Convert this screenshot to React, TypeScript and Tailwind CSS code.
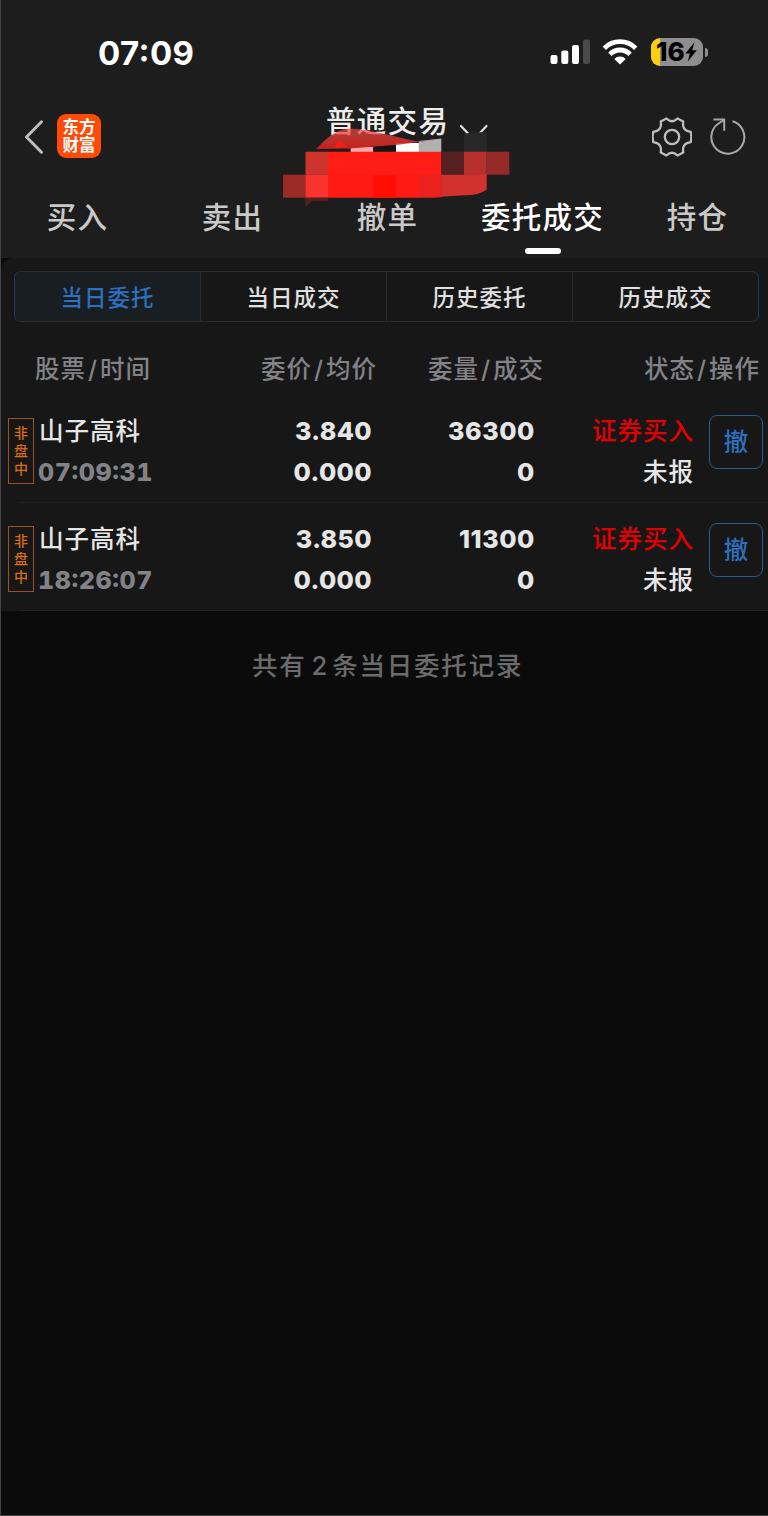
import clsx from 'clsx';

type Order = {
  name: string;
  time: string;
  price: string;
  average: string;
  volume: string;
  filled: string;
  side: string;
  status: string;
};

const TABS = ['买入', '卖出', '撤单', '委托成交', '持仓'];
const SEGMENTS = ['当日委托', '当日成交', '历史委托', '历史成交'];

const ORDERS: Order[] = [
  {
    name: '山子高科',
    time: '07:09:31',
    price: '3.840',
    average: '0.000',
    volume: '36300',
    filled: '0',
    side: '证券买入',
    status: '未报',
  },
  {
    name: '山子高科',
    time: '18:26:07',
    price: '3.850',
    average: '0.000',
    volume: '11300',
    filled: '0',
    side: '证券买入',
    status: '未报',
  },
];

export default function App() {
  return (
    <div className="flex h-[1516px] w-[768px] flex-col overflow-hidden border-b border-l border-[#454545] bg-[#0b0b0b] font-['Inter','Noto_Sans_CJK_SC',sans-serif] font-medium text-[#e6e6e6]">
      <header className="flex h-[258px] shrink-0 flex-col bg-[#1d1d1d]">
        <StatusBar />
        <TitleBar />
        <Tabs active="委托成交" />
      </header>

      <main className="h-[353px] shrink-0 rounded-tl-xl bg-[#171717]">
        <Segments active="当日委托" />
        <TableHead />
        {ORDERS.map((order) => (
          <OrderRow key={order.time} order={order} />
        ))}
      </main>

      <p className="mt-[37px] ml-[251px] h-9 text-[25.5px] leading-9 tracking-[1.8px] whitespace-nowrap text-[#6b6b6b]">
        共有<span className="mr-[3px] ml-[5px]">2</span>条当日委托记录
      </p>
    </div>
  );
}

function StatusBar() {
  return (
    <div className="flex h-[104px] items-center pl-[97px]">
      <span className="mt-0.5 w-[452px] text-[33px] leading-10 font-bold tracking-[0.4px] text-white [font-feature-settings:'case']">
        07:09
      </span>
      <svg className="h-[26px] w-10" viewBox="0 0 40 26" fill="#fff">
        <rect x="0.5" y="16" width="7" height="9" rx="2" />
        <rect x="11.3" y="11.5" width="7" height="13.5" rx="2" />
        <rect x="22" y="6" width="7" height="19" rx="2" />
        <rect x="33" y="0.5" width="7" height="24.5" rx="2" fill="#4a4a4a" />
      </svg>
      <svg className="ml-3 h-[26px] w-9" viewBox="0 0 36 26">
        <g fill="none" stroke="#fff" strokeWidth="4.8">
          <path d="M2.3 9.3a22 22 0 0 1 31.4 0" />
          <path d="M7.900 15.300a14 14 0 0 1 20.200 0" />
        </g>
        <path d="M12.3 20a8 8 0 0 1 11.4 0L18 25.5Z" fill="#fff" />
      </svg>
      <div className="ml-[13px] flex items-center gap-0.5">
        <div className="flex h-7 w-[52px] items-center rounded-[9px] bg-linear-to-r from-[#fccf12] from-[9px] to-[#8e8e8e] to-[9px] pl-[5px] text-black">
          <span className="text-[26px] leading-7 font-extrabold tracking-[0px]">16</span>
          <svg className="h-5 w-3" viewBox="0 0 12 20">
            <path d="M9.3 0.5 0.4 11.6h4.4L2.8 19.5 11.8 8.2H7.2Z" />
          </svg>
        </div>
        <span className="h-[9px] w-[3px] rounded-r-full bg-[#8e8e8e]" />
      </div>
    </div>
  );
}

function TitleBar() {
  return (
    <div className="relative flex h-[66px] items-center">
      <svg
        className="ml-[23px] h-9 w-5"
        viewBox="0 0 20 36"
        fill="none"
        stroke="#bdbdbd"
        strokeWidth="3"
        strokeLinecap="round"
        strokeLinejoin="round"
      >
        <path d="M17.5 2.8 2.5 18l15 15.2" />
      </svg>
      <div className="mr-px mb-0.5 ml-[13px] flex size-[44px] flex-col justify-center rounded-[9px] bg-[#ff4a08] text-center text-[16.5px] leading-[18px] font-bold text-white">
        <span>东方</span>
        <span>财富</span>
      </div>
      <div className="mb-[33px] ml-[224px] flex w-[326px] items-center">
        <h1 className="text-[29.5px] leading-10 font-medium tracking-[1.3px] text-[#ededed]">
          普通交易
        </h1>
        <svg
          className="mt-[18px] ml-2.5 h-4 w-[30px]"
          viewBox="0 0 30 16"
          fill="none"
          stroke="#e0e0e0"
          strokeWidth="2.2"
          strokeLinecap="round"
        >
          <path d="m2 4 7 7.5M27.500 4l-7 7.500" />
        </svg>
      </div>
      <svg
        className="h-10 w-10"
        viewBox="0 0 40 40"
        fill="none"
        stroke="#bdbdbd"
        strokeWidth="2.3"
        strokeLinejoin="round"
      >
        <path d="M14.500 1.500Q20 7 25.500 1.500L31.300 4.500Q29.500 13.500 38.700 14.800Q40 20 38.700 25.200Q29.500 26.500 31.300 35.500L25.500 38.500Q20 33 14.500 38.500L8.700 35.500Q10.500 26.500 1.300 25.200Q0 20 1.300 14.800Q10.500 13.500 8.700 4.500Z" />
        <circle cx="20" cy="20" r="7.2" />
      </svg>
      <svg
        className="ml-[18px] h-10 w-9"
        viewBox="0 0 36 40"
        fill="none"
        stroke="#a8a8a8"
        strokeWidth="2"
      >
        <path d="M22.500 4.300A16.500 16.500 0 1 1 8.500 6.500L14 3" />
        <path d="M3.500 2.500H14.200V13.800" />
      </svg>
      <AccountMask />
    </div>
  );
}

// Mosaic laid over the account number, drawn in page coordinates
function AccountMask() {
  return (
    <svg
      className="absolute top-[24px] left-[281px] h-20 w-[230px]"
      viewBox="282 128 230 80"
      shapeRendering="geometricPrecision"
    >
      <defs>
        <linearGradient id="smear" x1="0" x2="0" y1="0" y2="1">
          <stop offset="0" stopColor="#f34b45" stopOpacity="0.65" />
          <stop offset="1" stopColor="#c81f1b" />
        </linearGradient>
      </defs>
      <path d="M350.700 147h22.600v5h-22.600Z" fill="#ffa9a9" />
      <path d="M373.300 145h23v7h-23Z" fill="#141414" />
      <path d="M396 143h23v9h-23Z" fill="#fff" />
      <path d="M418.700 141 441.300 138.500V152h-22.600Z" fill="#b0b0b0" />
      <path
        d="M316 149C323 143 332 130 349 128.500C370 129 395 137 418 141.500L441 139L400 144.500L350 148.500Z"
        fill="url(#smear)"
      />
      <path d="m334 148 5-8 8 7Z" fill="#f51d18" />
      <path d="M464 133.500q12-.5 22.700-2V152H464Z" fill="#282828" />
      <g>
        <path d="M305.500 151.700H328v23h-22.500Z" fill="#ce342e" />
        <path d="M328 151.700h113.500v24H328Z" fill="#ff1d16" />
        <path d="M441.300 151.700H464v23h-22.700Z" fill="#552020" />
        <path d="M464 151.700h22.700v24H464Z" fill="#b7312c" />
        <path d="M486.700 151.700h22.600v23h-22.600Z" fill="#942b28" />
        <path d="M283 174.700h22.700v23H283Z" fill="#9c2b28" />
        <path d="M305.500 174.700H328.500v23h-23Z" fill="#fb332e" />
        <path d="M328 174.700h91v23h-91Z" fill="#ff1b14" />
        <path d="M373.300 174.700H396v23h-22.700Z" fill="#ff0e06" />
        <path d="M418.700 174.700h23v22.500l-9 .5h-14Z" fill="#eb211d" />
        <path d="M441.300 174.700h45.400v15q-9 6-22.700 5.500l-22.700 1.500Z" fill="#d1322d" />
      </g>
      <path d="M305.500 197.700H328v3.300h-16l-6.500 6Z" fill="#54201f" />
    </svg>
  );
}

function Tabs({ active }: { active: string }) {
  return (
    <nav className="-ml-px flex h-[88px] text-[29.5px] leading-[42px] tracking-[1.3px]">
      {TABS.map((tab) => (
        <div
          key={tab}
          className={clsx(
            'flex w-[155px] shrink-0 flex-col items-center pt-[26px] whitespace-nowrap',
            tab === active ? 'text-white' : 'text-[#c9c9c9]',
          )}
        >
          <span>{tab}</span>
          {tab === active && <span className="mt-2.5 h-1.5 w-9 rounded-full bg-white" />}
        </div>
      ))}
    </nav>
  );
}

function Segments({ active }: { active: string }) {
  return (
    <div className="flex h-[79px] pt-[13px] pl-[13px]">
      <div className="flex h-[51px] w-[745px] divide-x divide-[#2c2c2c] overflow-hidden rounded-[7px] border border-x-[#25394f] border-y-[#2c2e30]">
        {SEGMENTS.map((segment) => (
          <span
            key={segment}
            className={clsx(
              'flex-1 text-center text-[22.5px] leading-[51px] tracking-[1px]',
              segment === active ? 'bg-[#191e22] text-[#2d70bd]' : 'text-[#e0e0e0]',
            )}
          >
            {segment}
          </span>
        ))}
      </div>
    </div>
  );
}

function TableHead() {
  return (
    <div className="flex h-[58px] pt-3.5 text-[24.5px] leading-[36px] tracking-[1px] whitespace-nowrap text-[#828287]">
      <HeadCell className="w-[150px] text-right" top="股票" bottom="时间" />
      <HeadCell className="w-[226px] text-right" top="委价" bottom="均价" />
      <HeadCell className="w-[167px] text-right" top="委量" bottom="成交" />
      <HeadCell className="w-[216px] text-right" top="状态" bottom="操作" />
    </div>
  );
}

function HeadCell({ className, top, bottom }: { className: string; top: string; bottom: string }) {
  return (
    <span className={className}>
      {top}
      <span className="mx-[2px]">/</span>
      {bottom}
    </span>
  );
}

function OrderRow({ order }: { order: Order }) {
  return (
    <div className="flex h-[108px] bg-[linear-gradient(#202020,#202020)] bg-[length:750px_1px] bg-[position:17px_107px] bg-no-repeat pt-4 text-[25px] leading-[41px] whitespace-nowrap">
      <div className="mt-[7px] ml-[7px] flex h-[66px] w-[26px] shrink-0 flex-col items-center border border-[#9a5127] pt-[5px] text-[14px] leading-[18px] text-[#d96c14]">
        <span>非</span>
        <span>盘</span>
        <span>中</span>
      </div>
      <div className="ml-[5px] flex w-[130px] flex-col">
        <span className="text-[24.5px] tracking-[1px]">{order.name}</span>
        <span className="-ml-px font-extrabold tracking-[0.6px] text-[#828287] [font-feature-settings:'case','tnum']">
          {order.time}
        </span>
      </div>
      <div className="flex w-[203px] flex-col text-right font-extrabold tracking-[0.4px]">
        <span>{order.price}</span>
        <span>{order.average}</span>
      </div>
      <div className="flex w-[163px] flex-col text-right font-extrabold tracking-[0.6px]">
        <span>{order.volume}</span>
        <span>{order.filled}</span>
      </div>
      <div className="flex w-[159px] flex-col text-right text-[24.5px] tracking-[1px]">
        <span className="text-[#e30000]">{order.side}</span>
        <span>{order.status}</span>
      </div>
      <button className="mt-1 ml-[15px] size-[54px] shrink-0 rounded-lg border-[1.5px] border-[#2b5a92] text-[24.5px] leading-[53px] text-[#2d70bd]">
        撤
      </button>
    </div>
  );
}
